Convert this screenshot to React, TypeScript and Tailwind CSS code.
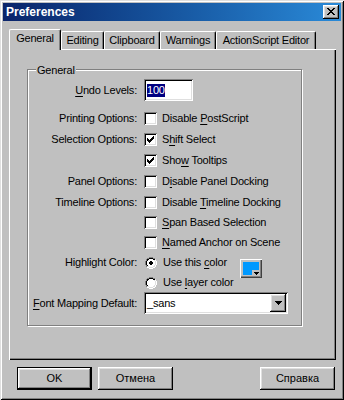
import React from 'react';

const raised =
  'shadow-[inset_-1px_-1px_0_#000,inset_1px_1px_0_#fff,inset_-2px_-2px_0_#808080,inset_2px_2px_0_#dfdfdf]';
const sunken =
  'shadow-[inset_1px_1px_0_#808080,inset_-1px_-1px_0_#fff,inset_2px_2px_0_#000,inset_-2px_-2px_0_#dfdfdf]';

const PALETTE: Record<string, string> = {
  k: '#000000',
  d: '#808080',
  w: '#ffffff',
  l: '#dfdfdf',
};

// tiny bitmap glyphs, drawn pixel by pixel like the classic widgets
const CLOSE_X = ['kk....kk', '.kk..kk.', '..kkkk..', '...kk...', '..kkkk..', '.kk..kk.', 'kk....kk'];
const CHECK = ['......k', '.....kk', 'k...kkk', 'kk.kkk.', 'kkkkk..', '.kkk...', '..k....'];
const ARROW = ['kkkkkkk', '.kkkkk.', '..kkk..', '...k...'];
const MINI_ARROW = ['kkkkk', '.kkk.', '..k..'];
const RADIO = [
  '....dddd....',
  '..ddkkkkdd..',
  '.dkkwwwwkkl.',
  '.dkwwwwwwlw.',
  'dkwwwwwwwwlw',
  'dkwwwwwwwwlw',
  'dkwwwwwwwwlw',
  'dkwwwwwwwwlw',
  '.dkwwwwwwlw.',
  '.dllwwwwllw.',
  '..wwllllww..',
  '....wwww....',
];
const RADIO_ON = [
  '....dddd....',
  '..ddkkkkdd..',
  '.dkkwwwwkkl.',
  '.dkwwwwwwlw.',
  'dkwwwkkwwwlw',
  'dkwwkkkkwwlw',
  'dkwwkkkkwwlw',
  'dkwwwkkwwwlw',
  '.dkwwwwwwlw.',
  '.dllwwwwllw.',
  '..wwllllww..',
  '....wwww....',
];

function Pixels({ rows }: { rows: string[] }) {
  const w = rows[0].length;
  const h = rows.length;
  return (
    <svg width={w} height={h} viewBox={`0 0 ${w} ${h}`} shapeRendering="crispEdges" className="block shrink-0">
      {rows.flatMap((r, y) =>
        r.split('').map((c, x) =>
          c === '.' ? null : <rect key={`${x}-${y}`} x={x} y={y} width={1} height={1} fill={PALETTE[c]} />
        )
      )}
    </svg>
  );
}

const U = ({ children }: { children: React.ReactNode }) => (
  <span className="underline underline-offset-[2px]">{children}</span>
);

function Checkbox({ checked, children }: { checked?: boolean; children: React.ReactNode }) {
  return (
    <div className="flex items-center">
      <div className={`w-[13px] h-[13px] shrink-0 bg-white flex items-center justify-center ${sunken}`}>
        {checked && <Pixels rows={CHECK} />}
      </div>
      <span className="ml-[5px] whitespace-nowrap">{children}</span>
    </div>
  );
}

function Row({ label, h, children }: { label?: React.ReactNode; h: string; children: React.ReactNode }) {
  return (
    <div className={`flex items-center ${h}`}>
      <div className="w-[109px] shrink-0 text-right whitespace-nowrap">{label}</div>
      <div className="ml-[7px] flex items-center">{children}</div>
    </div>
  );
}

const tabs = [
  { label: 'Editing', w: 'w-[43px]' },
  { label: 'Clipboard', w: 'w-[56px]' },
  { label: 'Warnings', w: 'w-[56px]' },
  { label: 'ActionScript Editor', w: 'w-[100px]' },
];

export default function App() {
  return (
    <div
      className={`w-[344px] h-[400px] bg-[#c0c0c0] p-[3px] flex flex-col text-[11px] text-black tracking-[-0.2px] font-['Liberation_Sans',Arial,sans-serif] shadow-[inset_1px_1px_0_#dfdfdf,inset_-1px_-1px_0_#000,inset_2px_2px_0_#fff,inset_-2px_-2px_0_#808080]`}
    >
      {/* Title bar */}
      <div className="h-[18px] flex items-center justify-between pl-[3px] pr-[2px] bg-gradient-to-r from-[#0a246a] to-[#2a8ad8]">
        <span className="text-white font-bold text-[12px] tracking-normal">Preferences</span>
        <div className={`w-[16px] h-[14px] bg-[#c0c0c0] flex items-center justify-center ${raised}`}>
          <div className="-mt-[1px]">
            <Pixels rows={CLOSE_X} />
          </div>
        </div>
      </div>

      {/* Tabs + page */}
      <div className="mt-[8px] ml-[6px] mr-[5px] flex flex-col">
        <div className="flex items-end h-[20px]">
          <div className="relative z-10 -mb-px h-[21px] w-[52px] flex items-center justify-center pb-[3px] bg-[#c0c0c0] border-l border-t border-r border-white border-r-black rounded-t-[2px] shadow-[inset_-1px_0_0_#808080]">
            General
          </div>
          {tabs.map((t) => (
            <div
              key={t.label}
              className={`h-[18px] ${t.w} flex items-center justify-center pb-[1px] whitespace-nowrap border-l border-t border-r border-white border-r-black rounded-t-[2px] shadow-[inset_-1px_0_0_#808080]`}
            >
              {t.label}
            </div>
          ))}
        </div>

        <div className="h-[311px] bg-[#c0c0c0] pl-[18px] pt-[20px] shadow-[inset_1px_1px_0_#fff,inset_-1px_-1px_0_#000,inset_-2px_-2px_0_#808080]">
          {/* Group box */}
          <div className="relative w-[275px] h-[257px] border border-[#808080] pt-[9px] shadow-[inset_1px_1px_0_#fff,1px_1px_0_#fff]">
            <span className="absolute -top-[8px] left-[8px] bg-[#c0c0c0] px-[1px]">General</span>

            <Row h="h-[22px]" label={<><U>U</U>ndo Levels:</>}>
              <div className={`w-[49px] h-[22px] bg-white flex items-center pl-[3px] ${sunken}`}>
                <span className="bg-[#000080] text-white leading-[13px]">100</span>
              </div>
            </Row>

            <div className="mt-[7px]">
              <Row h="h-[21px]" label="Printing Options:">
                <Checkbox>
                  Disable <U>P</U>ostScript
                </Checkbox>
              </Row>
              <Row h="h-[21px]" label="Selection Options:">
                <Checkbox checked>
                  S<U>h</U>ift Select
                </Checkbox>
              </Row>
              <Row h="h-[21px]">
                <Checkbox checked>
                  Sho<U>w</U> Tooltips
                </Checkbox>
              </Row>
              <Row h="h-[21px]" label="Panel Options:">
                <Checkbox>
                  D<U>i</U>sable Panel Docking
                </Checkbox>
              </Row>
              <Row h="h-[20px]" label="Timeline Options:">
                <Checkbox>
                  Disable <U>T</U>imeline Docking
                </Checkbox>
              </Row>
              <Row h="h-[20px]">
                <Checkbox>
                  <U>S</U>pan Based Selection
                </Checkbox>
              </Row>
              <Row h="h-[20px]">
                <Checkbox>
                  <U>N</U>amed Anchor on Scene
                </Checkbox>
              </Row>

              <Row h="h-[21px]" label="Highlight Color:">
                <div className="ml-[1px] flex items-center h-[21px]">
                  <Pixels rows={RADIO_ON} />
                  <span className="ml-[6px] w-[77px] whitespace-nowrap">
                    Use this <U>c</U>olor
                  </span>
                  <div className="relative self-start mt-[7px] w-[22px] h-[19px] bg-[#c0c0c0] p-[3px] shadow-[inset_1px_1px_0_#fff,inset_-1px_-1px_0_#404040,inset_-2px_-2px_0_#808080]">
                    <div className="w-full h-full bg-[#0099ff]" />
                    <div className="absolute right-[2px] bottom-[2px] w-[8px] h-[6px] bg-[#c0c0c0] flex items-end justify-center pb-[1px]">
                      <Pixels rows={MINI_ARROW} />
                    </div>
                  </div>
                </div>
              </Row>
              <Row h="h-[19px]">
                <div className="ml-[1px] flex items-center">
                  <Pixels rows={RADIO} />
                  <span className="ml-[6px] whitespace-nowrap">
                    Use <U>l</U>ayer color
                  </span>
                </div>
              </Row>

              <Row h="h-[22px]" label={<><U>F</U>ont Mapping Default:</>}>
                <div className={`w-[144px] h-[22px] bg-white flex items-center pl-[3px] pr-[2px] ${sunken}`}>
                  <span>_sans</span>
                  <div className={`ml-auto w-[16px] h-[18px] bg-[#c0c0c0] flex items-center justify-center ${raised}`}>
                    <Pixels rows={ARROW} />
                  </div>
                </div>
              </Row>
            </div>
          </div>
        </div>
      </div>

      {/* Dialog buttons */}
      <div className="mt-[7px] flex pl-[14px] pr-[6px] tracking-normal">
        <button className={`w-[75px] h-[23px] bg-[#c0c0c0] border border-black flex items-center justify-center ${raised}`}>
          OK
        </button>
        <button className={`ml-[6px] w-[75px] h-[23px] bg-[#c0c0c0] flex items-center justify-center ${raised}`}>
          Отмена
        </button>
        <button className={`ml-auto w-[75px] h-[23px] bg-[#c0c0c0] flex items-center justify-center ${raised}`}>
          Справка
        </button>
      </div>
    </div>
  );
}
